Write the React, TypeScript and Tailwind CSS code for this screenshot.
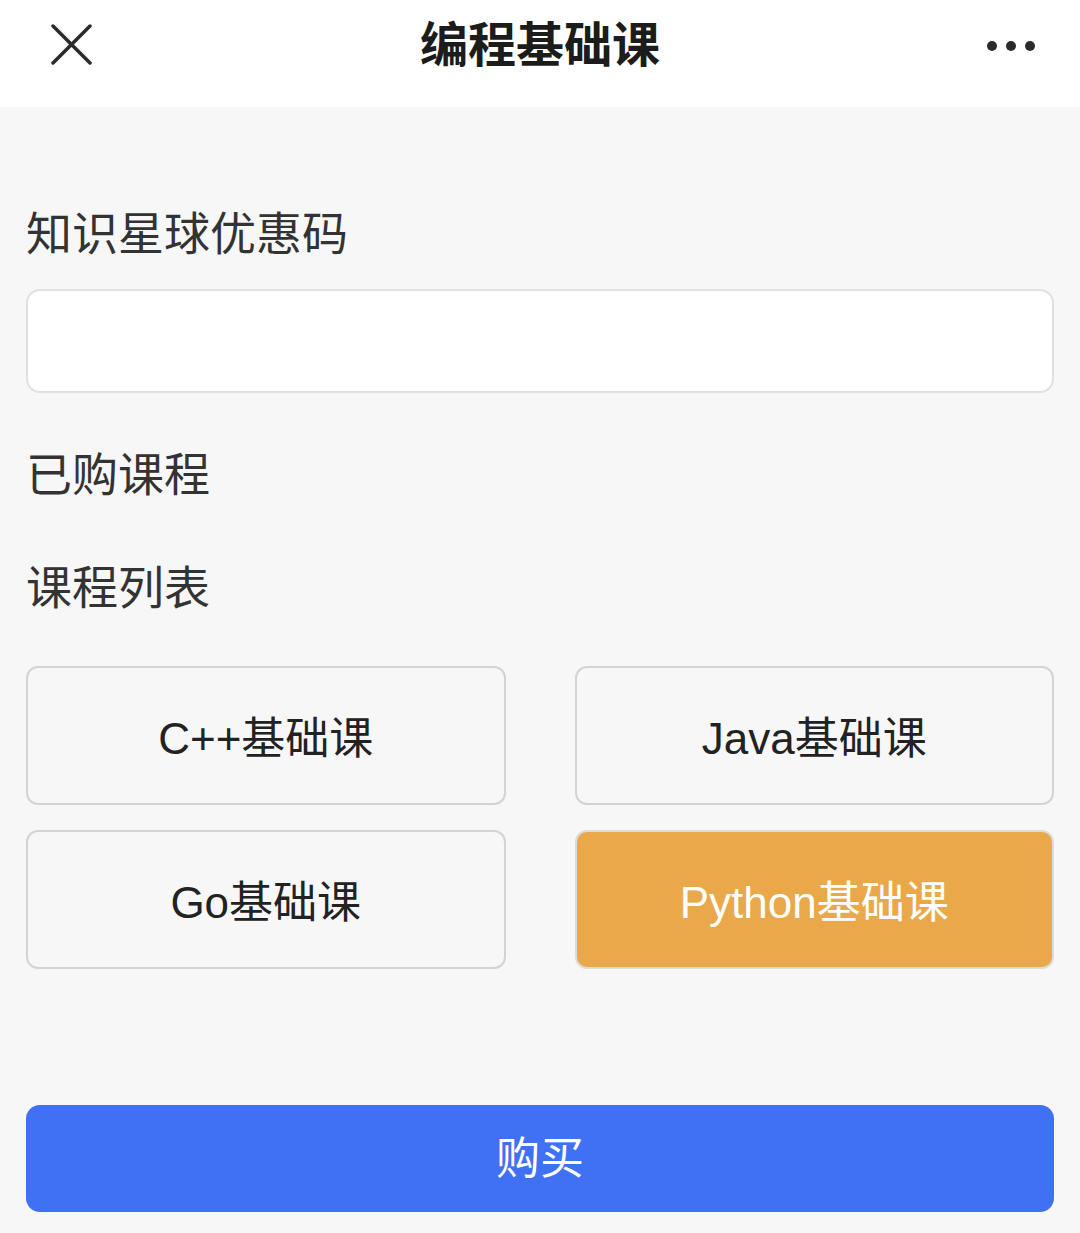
import { FC, useState } from "react";

const courses = ["C++基础课", "Java基础课", "Go基础课", "Python基础课"];

const font = {
  fontFamily: '"Liberation Sans", "Noto Sans CJK SC", sans-serif',
};

const App: FC = () => {
  const [selected, setSelected] = useState("Python基础课");
  const [code, setCode] = useState("");

  return (
    <div className="min-h-[1233px] w-[1080px] bg-[#f7f7f7]" style={font}>
      {/* header */}
      <div className="h-[107px] bg-white grid grid-cols-[1fr_auto_1fr] items-center">
        <div className="pl-[50px] mt-[-18px]">
          <svg width="42" height="42" viewBox="0 0 42 42">
            <path
              d="M3 2 L40 39 M40 2 L3 39"
              stroke="#2b2b2b"
              strokeWidth="3.5"
              strokeLinecap="round"
            />
          </svg>
        </div>
        <div className="text-[48px] font-bold text-[#1c1c1c] leading-none mt-[-16px]">
          编程基础课
        </div>
        <div className="flex justify-end pr-[44px] mt-[-16px]">
          <svg width="50" height="12" viewBox="0 0 50 12">
            <circle cx="6" cy="6" r="5" fill="#2b2b2b" />
            <circle cx="25" cy="6" r="5" fill="#2b2b2b" />
            <circle cx="44" cy="6" r="5" fill="#2b2b2b" />
          </svg>
        </div>
      </div>

      <div className="px-[26px]">
        <div className="pt-[95px] text-[46px] leading-[64px] text-[#333]">
          知识星球优惠码
        </div>
        <input
          value={code}
          onChange={(e) => setCode(e.target.value)}
          className="mt-[23px] block w-full h-[104px] rounded-[14px] border-2 border-[#e0e0e0] bg-white px-6 text-[40px] outline-none"
        />
        <div className="mt-[50px] text-[46px] leading-[64px] text-[#333]">
          已购课程
        </div>
        <div className="mt-[49px] text-[46px] leading-[64px] text-[#333]">
          课程列表
        </div>

        <div className="mt-[46px] grid grid-cols-2 gap-x-[69px] gap-y-[25px]">
          {courses.map((c) => (
            <button
              key={c}
              onClick={() => setSelected(c)}
              className={`h-[139px] pt-[6px] rounded-[12px] border-2 text-[44px] ${
                selected === c
                  ? "bg-[#e9a94a] border-[#dcdcdc] text-white"
                  : "bg-[#f7f7f7] border-[#d3d3d3] text-[#222]"
              }`}
            >
              {c}
            </button>
          ))}
        </div>

        <button className="mt-[136px] w-full h-[107px] rounded-[14px] bg-[#4070f4] text-white text-[44px]">
          购买
        </button>
      </div>
    </div>
  );
};

export default App;
